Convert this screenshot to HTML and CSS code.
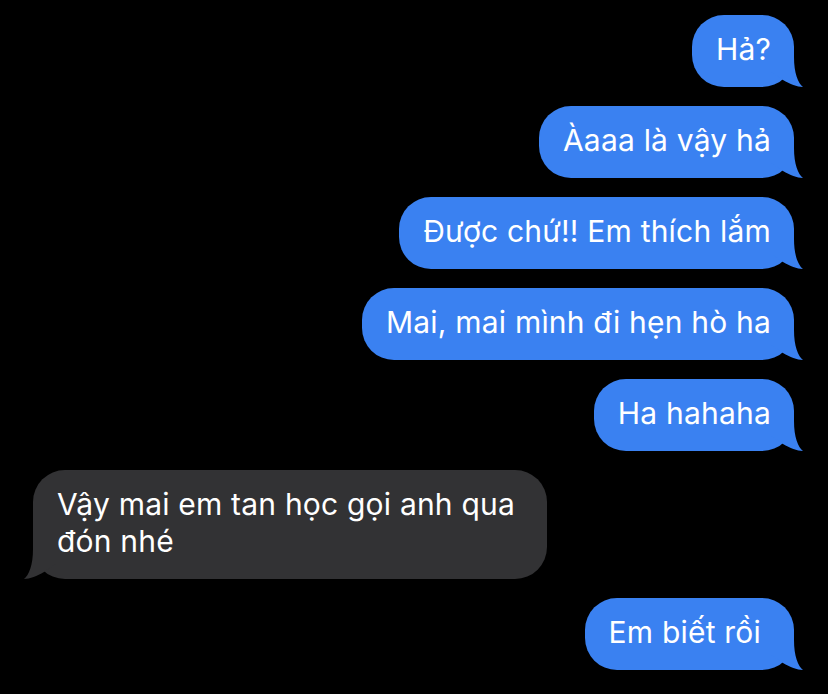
FILE: index.html
```html
<!DOCTYPE html>
<html lang="vi">
<head>
<meta charset="utf-8">
<title>Messages</title>
<link rel="stylesheet" href="styles.css">
</head>
<body>
<main class="thread">
  <div class="msg msg-out"><span class="text">Hả?</span><svg class="tail" viewBox="0 0 36 36" aria-hidden="true"><path d="M24 0 L24 6 C24 22 28 32 33 36 C27 36 20 33 13 29 L0 20 L0 0 Z"/></svg></div>
  <div class="msg msg-out"><span class="text">Àaaa là vậy hả</span><svg class="tail" viewBox="0 0 36 36" aria-hidden="true"><path d="M24 0 L24 6 C24 22 28 32 33 36 C27 36 20 33 13 29 L0 20 L0 0 Z"/></svg></div>
  <div class="msg msg-out"><span class="text">Được chứ!! Em thích lắm</span><svg class="tail" viewBox="0 0 36 36" aria-hidden="true"><path d="M24 0 L24 6 C24 22 28 32 33 36 C27 36 20 33 13 29 L0 20 L0 0 Z"/></svg></div>
  <div class="msg msg-out"><span class="text">Mai, mai mình đi hẹn hò ha</span><svg class="tail" viewBox="0 0 36 36" aria-hidden="true"><path d="M24 0 L24 6 C24 22 28 32 33 36 C27 36 20 33 13 29 L0 20 L0 0 Z"/></svg></div>
  <div class="msg msg-out"><span class="text">Ha hahaha</span><svg class="tail" viewBox="0 0 36 36" aria-hidden="true"><path d="M24 0 L24 6 C24 22 28 32 33 36 C27 36 20 33 13 29 L0 20 L0 0 Z"/></svg></div>
  <div class="msg msg-in"><span class="text">Vậy mai em tan học gọi anh qua<br>đón nhé</span><svg class="tail" viewBox="0 0 36 36" aria-hidden="true"><path d="M24 0 L24 6 C24 22 28 32 33 36 C27 36 20 33 13 29 L0 20 L0 0 Z"/></svg></div>
  <div class="msg msg-out msg-wide"><span class="text">Em biết rồi</span><svg class="tail" viewBox="0 0 36 36" aria-hidden="true"><path d="M24 0 L24 6 C24 22 28 32 33 36 C27 36 20 33 13 29 L0 20 L0 0 Z"/></svg></div>
</main>
</body>
</html>
```

FILE: styles.css
```css
html, body {
  margin: 0;
  padding: 0;
  background: #000;
  height: 100%;
  overflow: hidden;
}

.thread {
  display: flex;
  flex-direction: column;
  gap: 19px;
  padding: 15px 34px 0 33px;
  font-family: Inter, "Noto Sans", "Liberation Sans", sans-serif;
  font-size: 30px;
  letter-spacing: 0.2px;
  line-height: 37px;
  color: #fff;
}

.msg {
  position: relative;
  padding: 16px 23px 19px 24px;
  border-radius: 32px;
  max-width: 520px;
}

.msg-out {
  align-self: flex-end;
  background: #3a81f1;
}

.msg-wide {
  padding-right: 33px;
}

.msg-in {
  align-self: flex-start;
  background: #323234;
  padding-right: 32px;
}

.text {
  position: relative;
  z-index: 1;
}

.tail {
  position: absolute;
  bottom: 0;
  width: 36px;
  height: 36px;
}

.msg-out .tail {
  right: -12px;
  fill: #3a81f1;
}

.msg-in .tail {
  left: -12px;
  transform: scaleX(-1);
  fill: #323234;
}
```
